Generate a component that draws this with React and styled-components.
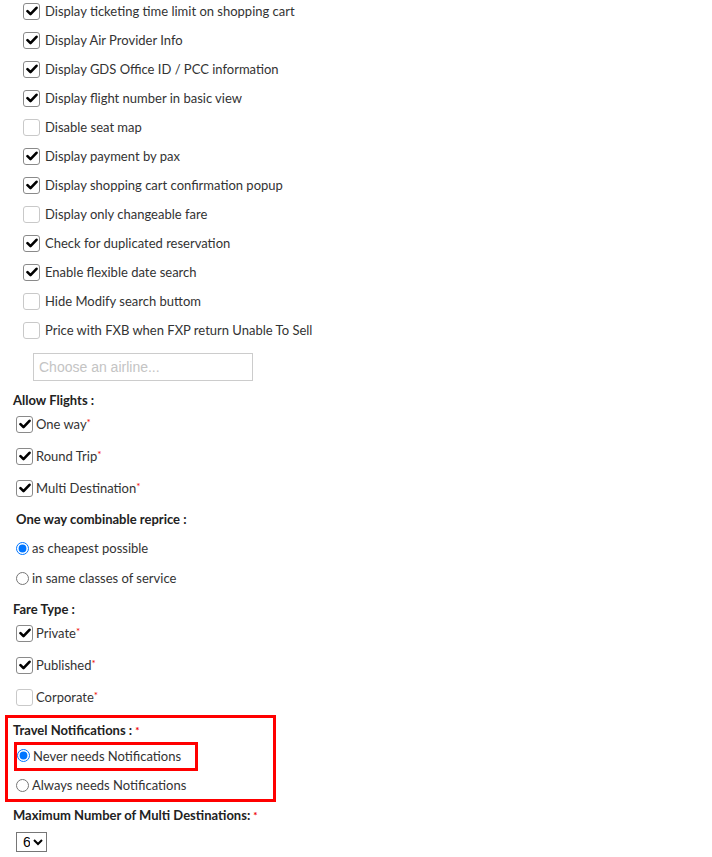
import React from 'react';
import styled, { createGlobalStyle } from 'styled-components';

const GlobalStyle = createGlobalStyle`
  body {
    margin: 0;
    background: #fff;
    font-family: Lato, "Open Sans", sans-serif;
    font-size: 13px;
    color: #333;
  }
`

const Page = styled.div`
  width: 712px;
  height: 857px;
  overflow: hidden;
`

const OptionList = styled.div`
  display: flex;
  flex-direction: column;
  gap: 7px;
  padding-left: 23px;
`

const Row = styled.label`
  display: flex;
  align-items: center;
  height: 22px;
  gap: ${props => props.gap || 5}px;
  padding-left: ${props => props.indent || 0}px;
  margin-top: ${props => props.top || 0}px;
  line-height: 22px;
  white-space: nowrap;
`

const Box = styled.span`
  width: 15px;
  height: 15px;
  border: 1px solid ${props => props.checked ? '#8a8a8a' : '#c9c9c9'};
  border-radius: 3px;
  background: #fff;
  display: flex;
  align-items: center;
  justify-content: center;
  flex: none;
`

const AirlineInput = styled.input`
  display: block;
  margin: 12px 0 0 33px;
  width: 220px;
  height: 28px;
  box-sizing: border-box;
  border: 1px solid #ccc;
  padding: 0 5px;
  font-family: Arial, "Liberation Sans", sans-serif;
  font-size: 14px;
  outline: none;
  &::placeholder { color: #c4c4c4; }
`

const Heading = styled.div`
  font-weight: 700;
  height: 18px;
  line-height: 18px;
  margin-top: ${props => props.top || 0}px;
  padding-left: ${props => props.indent || 13}px;
  color: #222;
`

const Group = styled.div`
  display: flex;
  flex-direction: column;
  gap: ${props => props.gap}px;
  margin-top: ${props => props.top}px;
`

const Req = styled.span`
  color: #e00;
  font-size: 10px;
  line-height: 10px;
  align-self: flex-start;
  margin-top: 4px;
  margin-left: -3px;
`

const HeadReq = styled.span`
  color: #e00;
  font-size: 10px;
  vertical-align: top;
  margin-left: 3px;
`

const Radio = styled.input`
  margin: 0;
  width: 13px;
  height: 13px;
  flex: none;
`

const Highlight = styled.div`
  margin: 7px 0 0 5px;
  width: 271px;
  box-sizing: border-box;
  border: 3px solid #f00;
  padding: 3px 0 3px 0;
`

const HighlightInner = styled.div`
  margin: 3px 0 0 6px;
  width: 184px;
  height: 29px;
  box-sizing: border-box;
  border: 3px solid #f00;
  display: flex;
  align-items: center;
  padding-bottom: 2px;
`

const Select = styled.select`
  display: block;
  margin: 8px 0 0 16px;
  width: 31px;
  height: 20px;
  font-family: Arial, "Liberation Sans", sans-serif;
  font-size: 14px;
  border: 1px solid #767676;
  border-radius: 0;
  padding: 0 0 0 2px;
  background: #fff;
  color: #000;
`

function Check({ checked }) {
  return (
    <Box checked={checked}>
      {checked && (
        <svg width="12" height="10" viewBox="0 0 12 10">
          <path d="M1.5 5.2 L4.5 8.2 L10.5 1.8" fill="none" stroke="#000" strokeWidth="2.6" strokeLinecap="round" strokeLinejoin="round" />
        </svg>
      )}
    </Box>
  )
}

const topOptions = [
  ['Display ticketing time limit on shopping cart', true],
  ['Display Air Provider Info', true],
  ['Display GDS Office ID / PCC information', true],
  ['Display flight number in basic view', true],
  ['Disable seat map', false],
  ['Display payment by pax', true],
  ['Display shopping cart confirmation popup', true],
  ['Display only changeable fare', false],
  ['Check for duplicated reservation', true],
  ['Enable flexible date search', true],
  ['Hide Modify search buttom', false],
  ['Price with FXB when FXP return Unable To Sell', false],
]

function RequiredCheck({ label, checked }) {
  return (
    <Row indent={16} gap={3}>
      <Check checked={checked} />
      <span>{label}</span>
      <Req>*</Req>
    </Row>
  )
}

export default function App() {
  return (
    <Page>
      <GlobalStyle />
      <OptionList>
        {topOptions.map(([label, checked]) => (
          <Row key={label}>
            <Check checked={checked} />
            <span>{label}</span>
          </Row>
        ))}
      </OptionList>
      <AirlineInput placeholder="Choose an airline..." />

      <Heading top={10}>Allow Flights :</Heading>
      <Group gap={10} top={4}>
        <RequiredCheck label="One way" checked />
        <RequiredCheck label="Round Trip" checked />
        <RequiredCheck label="Multi Destination" checked />
      </Group>

      <Heading top={11} indent={16}>One way combinable reprice :</Heading>
      <Group gap={8} top={9}>
        <Row indent={16} gap={3}>
          <Radio type="radio" name="reprice" defaultChecked />
          <span>as cheapest possible</span>
        </Row>
        <Row indent={16} gap={3}>
          <Radio type="radio" name="reprice" />
          <span>in same classes of service</span>
        </Row>
      </Group>

      <Heading top={11}>Fare Type :</Heading>
      <Group gap={10} top={4}>
        <RequiredCheck label="Private" checked />
        <RequiredCheck label="Published" checked />
        <RequiredCheck label="Corporate" checked={false} />
      </Group>

      <Highlight>
        <Heading indent={5}>Travel Notifications :<HeadReq>*</HeadReq></Heading>
        <HighlightInner>
          <Row gap={3}>
            <Radio type="radio" name="notif" defaultChecked />
            <span>Never needs Notifications</span>
          </Row>
        </HighlightInner>
        <Row indent={8} gap={3} top={3}>
          <Radio type="radio" name="notif" />
          <span>Always needs Notifications</span>
        </Row>
      </Highlight>

      <Heading top={4}>Maximum Number of Multi Destinations:<HeadReq>*</HeadReq></Heading>
      <Select defaultValue="6">
        {[1, 2, 3, 4, 5, 6, 7, 8].map(n => <option key={n}>{n}</option>)}
      </Select>
    </Page>
  );
}
